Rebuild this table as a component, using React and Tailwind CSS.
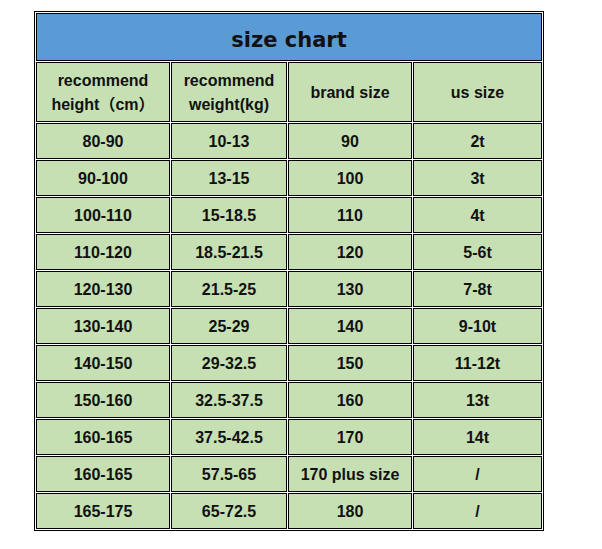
import React from 'react';

const rows = [
  ['80-90', '10-13', '90', '2t'],
  ['90-100', '13-15', '100', '3t'],
  ['100-110', '15-18.5', '110', '4t'],
  ['110-120', '18.5-21.5', '120', '5-6t'],
  ['120-130', '21.5-25', '130', '7-8t'],
  ['130-140', '25-29', '140', '9-10t'],
  ['140-150', '29-32.5', '150', '11-12t'],
  ['150-160', '32.5-37.5', '160', '13t'],
  ['160-165', '37.5-42.5', '170', '14t'],
  ['160-165', '57.5-65', '170 plus size', '/'],
  ['165-175', '65-72.5', '180', '/'],
];

const cell = 'border border-black bg-[#c6e0b4] text-center align-middle p-0';

export default function App() {
  return (
    <div className="w-[602px] h-[549px] bg-white pt-[11px] pl-[34px] font-['Liberation_Sans','Noto_Sans_CJK_SC',sans-serif] text-[#111] font-bold text-[16px]">
      <table className="w-[510px] table-fixed border-separate border-spacing-[1px] border border-black">
        <colgroup>
          <col className="w-[134px]" />
          <col className="w-[116px]" />
          <col className="w-[124px]" />
          <col className="w-[129px]" />
        </colgroup>
        <tbody>
          <tr>
            <td colSpan={4} className="h-[48px] border border-black bg-[#5b9bd5] text-center align-middle p-0 pt-[7px]">
              <span className="font-['DejaVu_Sans',sans-serif] text-[21px] font-bold text-[#111]">size chart</span>
            </td>
          </tr>
          <tr className="leading-[24px]">
            <td className={cell + ' h-[60px] pt-[1px]'}>recommend<br />height（cm）</td>
            <td className={cell + ' h-[60px] pt-[1px]'}>recommend<br />weight(kg)</td>
            <td className={cell + ' h-[60px] pt-[1px]'}>brand size</td>
            <td className={cell + ' h-[60px] pt-[1px]'}>us size</td>
          </tr>
          {rows.map((r, i) => (
            <tr key={i}>
              {r.map((v, j) => (
                <td key={j} className={cell + ' h-[36px] pt-[1px]'}>{v}</td>
              ))}
            </tr>
          ))}
        </tbody>
      </table>
    </div>
  );
}
